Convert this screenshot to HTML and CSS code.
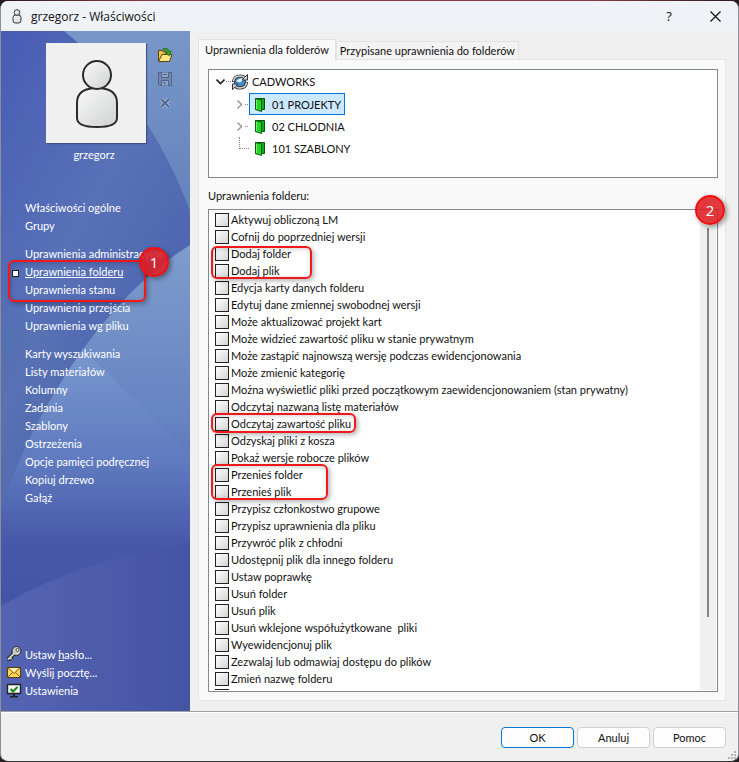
FILE: index.html
```html
<!DOCTYPE html>
<html lang="pl">

<head>
    <meta charset="UTF-8">
    <meta name="viewport" content="width=device-width, initial-scale=1.0">
    <title>grzegorz - Właściwości</title>
    <link rel="stylesheet" href="styles.css">
</head>

<body>
    <svg width="0" height="0" class="defs">
        <defs>
            <linearGradient id="silver" x1="0" y1="0" x2="1" y2="1">
                <stop offset="0" stop-color="#fafafa" />
                <stop offset="1" stop-color="#cfd1d0" />
            </linearGradient>
            <symbol id="folder" viewBox="0 0 12 15">
                <path d="M1.500 1.500h9v11h-9z" fill="#0fae16" stroke="#0a4f10" />
                <path d="M1.500 1.500L7.500 3v11.500L1.500 12.500z" fill="#22d822" stroke="#0b5c12" />
                <path d="M2.500 3v9" stroke="#7af070" />
            </symbol>
        </defs>
    </svg>

    <div class="window">
        <header class="titlebar">
            <svg class="title-icon" viewBox="0 0 10 15" fill="url(#silver)" stroke="#333">
                <rect x="1" y="6" width="8" height="8" rx="2.500" />
                <circle cx="5" cy="3.500" r="2.800" />
            </svg>
            <h1>grzegorz - Właściwości</h1>
            <button type="button" class="title-btn" aria-label="Pomoc">?</button>
            <button type="button" class="title-btn" aria-label="Zamknij">
                <svg width="11" height="11" viewBox="0 0 11 11" stroke="#111" stroke-width="1.200">
                    <path d="M0.500 0.500l10 10M10.500 0.500l-10 10" />
                </svg>
            </button>
        </header>

        <div class="main">
            <aside class="sidebar">
                <svg class="sidebar-bg" viewBox="0 0 189 680" preserveAspectRatio="none">
                    <defs>
                        <linearGradient id="bgBase" x1="0" y1="0" x2="0.600" y2="1">
                            <stop offset="0" stop-color="#485cb2" />
                            <stop offset="0.180" stop-color="#526bb5" />
                            <stop offset="0.420" stop-color="#5872b4" />
                            <stop offset="0.600" stop-color="#5167ae" />
                            <stop offset="1" stop-color="#4050a0" />
                        </linearGradient>
                        <linearGradient id="bgUpper" x1="0" y1="0" x2="1" y2="1">
                            <stop offset="0" stop-color="#485cb4" />
                            <stop offset="0.500" stop-color="#5871b7" />
                            <stop offset="1" stop-color="#4a61ac" />
                        </linearGradient>
                        <linearGradient id="bgTop" x1="0" y1="0" x2="0" y2="1">
                            <stop offset="0" stop-color="#7897c8" />
                            <stop offset="1" stop-color="#6583bc" />
                        </linearGradient>
                        <linearGradient id="bgArc" x1="0" y1="0" x2="0" y2="1">
                            <stop offset="0" stop-color="#7e9ccc" />
                            <stop offset="0.450" stop-color="#6683c2" />
                            <stop offset="0.750" stop-color="#5065b2" />
                            <stop offset="1" stop-color="#4555a5" />
                        </linearGradient>
                        <linearGradient id="bgCone" x1="0" y1="0" x2="0" y2="1">
                            <stop offset="0" stop-color="#7998ce" />
                            <stop offset="0.400" stop-color="#5f7abf" />
                            <stop offset="0.680" stop-color="#4859a9" />
                            <stop offset="1" stop-color="#4252a2" />
                        </linearGradient>
                        <linearGradient id="bgBottom" x1="0" y1="0" x2="1" y2="0">
                            <stop offset="0" stop-color="#5564b2" />
                            <stop offset="1" stop-color="#4454a4" />
                        </linearGradient>
                    </defs>
                    <path d="M0 0H189V680H0z" fill="url(#bgBase)" />
                    <path d="M0 0H189V330H85L0 269z" fill="url(#bgUpper)" />
                    <path d="M63 0Q146 66 189 180V0z" fill="url(#bgTop)" />
                    <path d="M189 214Q132 250 82 318Q28 395 0 477V600H189z" fill="url(#bgArc)" />
                    <path d="M82 318L189 424V600H0V477Q28 395 82 318z" fill="url(#bgCone)" />
                    <path d="M0 575Q75 530 189 512V680H0z" fill="url(#bgBottom)" />
                </svg>

                <div class="profile">
                    <div class="profile-card">
                        <svg class="avatar" viewBox="0 0 100 100">
                            <path d="M31 60Q31 45 51 45T71 60V75Q71 84 51 84T31 75z" fill="url(#silver)" stroke="#2b2b2b" stroke-width="2" />
                            <circle cx="51" cy="32" r="14" fill="url(#silver)" stroke="#2b2b2b" stroke-width="2" />
                        </svg>
                        <span>grzegorz</span>
                    </div>
                    <div class="tools">
                        <button type="button" aria-label="Otwórz">
                            <svg width="16" height="16" viewBox="0 0 16 16">
                                <path d="M1.500 14.500V3.500h4l1 1.500h6v9.500z" fill="#f3c33c" stroke="#5c4310" />
                                <path d="M1.500 14.500L5 7.500h10l-2.500 7z" fill="#ffe680" stroke="#5c4310" />
                                <path d="M6 1.500q5-1 6.500 3l2-.5-2 5-4.500-3 2-.5q-1-2.500-4-3z" fill="#35a024" stroke="#17660f" stroke-width="0.600" />
                            </svg>
                        </button>
                        <button type="button" aria-label="Zapisz" disabled>
                            <svg width="16" height="16" viewBox="0 0 16 16" fill="none" stroke="#4f6488">
                                <path d="M1.500 1.500h13v13h-12l-1-1z" fill="#7088b0" />
                                <path d="M4.500 1.500v5h7v-5M4.500 14.500v-5h7v5" fill="#8ea4c8" />
                                <path d="M6 3.500h4M6 11.500h2v2" />
                            </svg>
                        </button>
                        <button type="button" aria-label="Usuń" disabled>
                            <svg width="16" height="16" viewBox="0 0 16 16" fill="none">
                                <path d="M4 4l8 8M12 4l-8 8" stroke="#9fb4d4" stroke-width="4" />
                                <path d="M4 4l8 8M12 4l-8 8" stroke="#536a8e" stroke-width="2" />
                            </svg>
                        </button>
                    </div>
                </div>

                <nav class="menu">
                    <ul>
                        <li><a href="#">Właściwości ogólne</a></li>
                        <li><a href="#">Grupy</a></li>
                    </ul>
                    <ul class="marked">
                        <li><a href="#">Uprawnienia administracyjne</a></li>
                        <li class="current"><a href="#" aria-current="page">Uprawnienia folderu</a></li>
                        <li><a href="#">Uprawnienia stanu</a></li>
                        <li><a href="#">Uprawnienia przejścia</a></li>
                        <li><a href="#">Uprawnienia wg pliku</a></li>
                        <li class="mark mark-nav" aria-hidden="true"></li>
                        <li class="badge badge-nav">1</li>
                    </ul>
                    <ul>
                        <li><a href="#">Karty wyszukiwania</a></li>
                        <li><a href="#">Listy materiałów</a></li>
                        <li><a href="#">Kolumny</a></li>
                        <li><a href="#">Zadania</a></li>
                        <li><a href="#">Szablony</a></li>
                        <li><a href="#">Ostrzeżenia</a></li>
                        <li><a href="#">Opcje pamięci podręcznej</a></li>
                        <li><a href="#">Kopiuj drzewo</a></li>
                        <li><a href="#">Gałąź</a></li>
                    </ul>
                </nav>

                <ul class="actions">
                    <li>
                        <svg width="16" height="16" viewBox="0 0 16 16">
                            <path d="M9 6.500L2 13.500M4 11.500l2 2M2.500 13l1 1" stroke="#222" stroke-width="4" />
                            <circle cx="10.500" cy="5" r="4.500" fill="#c9cbc8" stroke="#222" />
                            <path d="M9 6.500L2 13.500M4 11.500l1.500 1.500" stroke="#c9cbc8" stroke-width="2" />
                            <circle cx="11.500" cy="4" r="1.500" fill="#fff" stroke="#444" />
                        </svg>
                        <a href="#">Ustaw <u>h</u>asło...</a>
                    </li>
                    <li>
                        <svg width="16" height="16" viewBox="0 0 16 16">
                            <path d="M1.500 3.500h13v10h-13z" fill="#ffd65c" stroke="#5a3c08" />
                            <path d="M2 4l6 5.500L14 4M2 13l4.500-4.500M14 13L9.500 8.500" fill="none" stroke="#8e5f12" />
                            <path d="M3.500 4h9L8 8z" fill="#fff3b8" />
                        </svg>
                        <a href="#">Wyślij pocztę...</a>
                    </li>
                    <li>
                        <svg width="16" height="16" viewBox="0 0 16 16">
                            <path d="M1.500 2.500h13v9h-13z" fill="#f4f6f4" stroke="#222" stroke-width="1.400" />
                            <path d="M7 12h2v2h3v1.500H4V14h3z" fill="#222" />
                            <path d="M4.500 7l2.500 2.500L11.500 5" fill="none" stroke="#178a1b" stroke-width="2" />
                        </svg>
                        <a href="#">Ustawienia</a>
                    </li>
                </ul>
            </aside>

            <section class="content">
                <div class="tabs" role="tablist">
                    <button type="button" class="tab active" role="tab" aria-selected="true">Uprawnienia dla folderów</button>
                    <button type="button" class="tab" role="tab" aria-selected="false">Przypisane uprawnienia do folderów</button>
                </div>

                <div class="panel">
                    <div class="tree" role="tree">
                        <div class="node root" role="treeitem" aria-expanded="true">
                            <svg class="arrow" viewBox="0 0 9 9"><path d="M0.500 2.500l4 4 4-4" fill="none" stroke="#222" stroke-width="1.600" /></svg>
                            <span class="dots"></span>
                            <svg width="16" height="16" viewBox="0 0 16 16">
                                <circle cx="8" cy="8" r="5.500" fill="#3f8fd0" stroke="#234" />
                                <path d="M4 7q4-4 8-2L8 8.500z" fill="#e8f4fb" />
                                <path d="M1.500 8Q2 2 8.500 2 11 2 12.500 3.500M14.500 8Q14 14 7.500 14 5 14 3.500 12.500" fill="none" stroke="#333" stroke-width="3.200" />
                                <path d="M10 6h5.500V0.500zM6 10H0.500v5.500z" fill="#d4d7d8" stroke="#333" />
                                <path d="M1.500 7.500Q2 2 8.500 2 11 2 12.500 3.500M14.500 8.500Q14 14 7.500 14 5 14 3.500 12.500" fill="none" stroke="#d4d7d8" stroke-width="1.500" />
                            </svg>
                            <span class="name">CADWORKS</span>
                        </div>
                        <div class="branch">
                            <div class="node" role="treeitem">
                                <svg class="arrow" viewBox="0 0 9 9"><path d="M2.500 0.500l4 4-4 4" fill="none" stroke="#999" stroke-width="1.500" /></svg>
                                <span class="dots"></span>
                                <span class="pick selected"><svg width="12" height="15"><use href="#folder" /></svg>01 PROJEKTY</span>
                            </div>
                            <div class="node" role="treeitem">
                                <svg class="arrow" viewBox="0 0 9 9"><path d="M2.500 0.500l4 4-4 4" fill="none" stroke="#999" stroke-width="1.500" /></svg>
                                <span class="dots"></span>
                                <span class="pick"><svg width="12" height="15"><use href="#folder" /></svg>02 CHLODNIA</span>
                            </div>
                            <div class="node leaf" role="treeitem">
                                <span class="dots"></span>
                                <span class="pick"><svg width="12" height="15"><use href="#folder" /></svg>101 SZABLONY</span>
                            </div>
                        </div>
                    </div>

                    <h2>Uprawnienia folderu:</h2>

                    <div class="list-wrap">
                        <div class="list">
                            <div class="rows">
                                <label><input type="checkbox"> Aktywuj obliczoną LM</label>
                                <label><input type="checkbox"> Cofnij do poprzedniej wersji</label>
                                <label><input type="checkbox"> Dodaj folder</label>
                                <label><input type="checkbox"> Dodaj plik</label>
                                <label><input type="checkbox"> Edycja karty danych folderu</label>
                                <label><input type="checkbox"> Edytuj dane zmiennej swobodnej wersji</label>
                                <label><input type="checkbox"> Może aktualizować projekt kart</label>
                                <label><input type="checkbox"> Może widzieć zawartość pliku w stanie prywatnym</label>
                                <label><input type="checkbox"> Może zastąpić najnowszą wersję podczas ewidencjonowania</label>
                                <label><input type="checkbox"> Może zmienić kategorię</label>
                                <label><input type="checkbox"> Można wyświetlić pliki przed początkowym zaewidencjonowaniem (stan prywatny)</label>
                                <label><input type="checkbox"> Odczytaj nazwaną listę materiałów</label>
                                <label><input type="checkbox"> Odczytaj zawartość pliku</label>
                                <label><input type="checkbox"> Odzyskaj pliki z kosza</label>
                                <label><input type="checkbox"> Pokaż wersje robocze plików</label>
                                <label><input type="checkbox"> Przenieś folder</label>
                                <label><input type="checkbox"> Przenieś plik</label>
                                <label><input type="checkbox"> Przypisz członkostwo grupowe</label>
                                <label><input type="checkbox"> Przypisz uprawnienia dla pliku</label>
                                <label><input type="checkbox"> Przywróć plik z chłodni</label>
                                <label><input type="checkbox"> Udostępnij plik dla innego folderu</label>
                                <label><input type="checkbox"> Ustaw poprawkę</label>
                                <label><input type="checkbox"> Usuń folder</label>
                                <label><input type="checkbox"> Usuń plik</label>
                                <label><input type="checkbox"> Usuń wklejone współużytkowane&nbsp; pliki</label>
                                <label><input type="checkbox"> Wyewidencjonuj plik</label>
                                <label><input type="checkbox"> Zezwalaj lub odmawiaj dostępu do plików</label>
                                <label><input type="checkbox"> Zmień nazwę folderu</label>
                                <label><input type="checkbox" aria-label="Zmień nazwę pliku"></label>
                            </div>
                            <div class="scrollbar"><div class="thumb"></div></div>
                        </div>
                        <div class="mark mark-add"></div>
                        <div class="mark mark-read"></div>
                        <div class="mark mark-move"></div>
                        <div class="badge badge-list">2</div>
                    </div>
                </div>
            </section>
        </div>

        <footer class="footer">
            <button type="button" class="btn default">OK</button>
            <button type="button" class="btn">Anuluj</button>
            <button type="button" class="btn">Pomoc</button>
            <svg class="grip" width="9" height="9" viewBox="0 0 9 9" fill="#b5b5b5">
                <path d="M7 0h2v2H7zM7 3h2v2H7zM4 3h2v2H4zM7 6h2v2H7zM4 6h2v2H4zM1 6h2v2H1z" />
            </svg>
        </footer>
    </div>
</body>

</html>
```
FILE: styles.css
```css
* {
    box-sizing: border-box;
}

body {
    margin: 0;
    padding-top: 1px;
    background: linear-gradient(to right, #241c20, #8a3b3e 20%, #8a3b3e 80%, #241c20);
    font-family: Lato, Tahoma, sans-serif;
    font-size: 11px;
    color: #111;
}

h1,
h2,
ul {
    margin: 0;
    padding: 0;
    font-weight: normal;
    list-style: none;
}

button {
    padding: 0;
    border: none;
    background: none;
    font: inherit;
    color: inherit;
}

a {
    color: inherit;
    text-decoration: none;
}

svg {
    display: block;
    flex: none;
}

.defs {
    position: absolute;
}

.window {
    display: flex;
    flex-direction: column;
    height: calc(100vh - 1px);
    border: 1px solid #8d8f96;
    border-top: none;
    border-bottom-color: #333;
    border-radius: 8px;
    background: #f0f0f0;
    overflow: hidden;
}

/* title bar */

.titlebar {
    display: flex;
    flex: none;
    align-items: center;
    height: 30px;
    padding-left: 11px;
    background: #eff3f8;
}

.title-icon {
    width: 10px;
    height: 15px;
}

.titlebar h1 {
    flex: 1;
    margin-left: 9px;
    font-family: "Open Sans", "Segoe UI", sans-serif;
    font-size: 12px;
}

.title-btn {
    display: flex;
    align-items: center;
    justify-content: center;
    width: 46px;
    height: 30px;
    font-family: "Open Sans", "Segoe UI", sans-serif;
    font-size: 13px;
}

.main {
    display: flex;
    flex: 1;
    min-height: 0;
}

/* sidebar */

.sidebar {
    position: relative;
    display: flex;
    flex: none;
    flex-direction: column;
    width: 189px;
    color: #fff;
}

.sidebar-bg {
    position: absolute;
    width: 100%;
    height: 100%;
    z-index: -1;
}

.window,
.sidebar {
    isolation: isolate;
}

.profile {
    display: flex;
    gap: 11px;
    padding: 12px 0 0 45px;
}

.profile-card {
    width: 100px;
    text-align: center;
}

.profile-card span {
    display: block;
    margin-top: 3px;
    line-height: 18px;
    padding-right: 4px;
}

.avatar {
    width: 100px;
    height: 100px;
    background: #f0f0f0;
    box-shadow: 1px 1px 1px #3d4f8c;
}

.tools {
    display: flex;
    flex-direction: column;
    gap: 8px;
    padding-top: 4px;
}

.menu {
    display: flex;
    flex: 1;
    flex-direction: column;
    gap: 10px;
    padding-top: 35px;
}

.menu a {
    display: block;
    padding-left: 24px;
    line-height: 18px;
}

.marked,
.current {
    position: relative;
}

.current a {
    text-decoration: underline;
}

.current::before {
    content: "";
    position: absolute;
    top: 7px;
    left: 11px;
    width: 5px;
    height: 5px;
    border: 1px solid #222;
    background: #fff;
}

.actions {
    padding: 0 0 12px 5px;
}

.actions li {
    display: flex;
    align-items: center;
    gap: 3px;
    height: 18px;
}

/* right side */

.content {
    display: flex;
    flex: 1;
    flex-direction: column;
    min-width: 0;
    padding: 8px 12px 10px 8px;
}

.tabs {
    display: flex;
    align-items: flex-end;
}

.tab {
    height: 18px;
    padding: 0 3px;
    border: 1px solid #e2e2e2;
    border-bottom: none;
    background: #f3f3f3;
}

.tab.active {
    z-index: 1;
    height: 21px;
    margin-bottom: -1px;
    padding: 0 6px 2px;
    background: #f9f9f9;
}

.panel {
    display: flex;
    flex: 1;
    flex-direction: column;
    min-height: 0;
    padding: 9px 7px 8px 9px;
    border: 1px solid #e5e5e5;
    background: #f9f9f9;
}

.tree {
    height: 109px;
    flex: none;
    padding: 0 7px;
    border: 1px solid #828790;
    background: #fff;
}

.node {
    display: flex;
    align-items: center;
    height: 22px;
}

.root {
    height: 23px;
}

.arrow {
    width: 9px;
    height: 9px;
}

.dots {
    width: 4px;
    margin: 0 1px;
    border-top: 1px dotted #888;
}

.root .dots {
    width: 5px;
}

.root .name {
    margin-left: 4px;
}

.branch {
    padding-left: 19px;
}

.branch .dots {
    width: 3px;
}

.pick {
    display: flex;
    align-items: center;
    gap: 6px;
    height: 22px;
    padding: 0 3px 0 4px;
    border: 1px solid transparent;
}

.pick.selected {
    border-color: #0078d7;
    background: #cce8ff;
}

.leaf {
    padding-left: 4px;
}

.branch .leaf .dots {
    width: 10px;
    height: 12px;
    margin: 0;
    border-top: none;
    border-left: 1px dotted #888;
    border-bottom: 1px dotted #888;
    align-self: flex-start;
}

h2 {
    margin: 9px 0 4px;
    font-size: 11px;
    line-height: 18px;
}

.list-wrap {
    position: relative;
    flex: 1;
    min-height: 0;
}

.list {
    display: flex;
    height: 100%;
    padding: 1px;
    border: 1px solid #828790;
    background: #fff;
    overflow: hidden;
}

.rows {
    flex: 1;
    padding-left: 5px;
    overflow: hidden;
}

.rows label {
    display: flex;
    align-items: center;
    gap: 2px;
    height: 17px;
    white-space: nowrap;
}

.rows input {
    appearance: none;
    width: 14px;
    height: 14px;
    margin: 0;
    border: 1px solid #222;
    background: linear-gradient(135deg, #fff, #d4d4d4);
}

.scrollbar {
    width: 16px;
    padding: 17px 7px 73px;
    background: #f0f0f0;
}

.thumb {
    height: 100%;
    background: #858585;
}

/* numbered callouts */

.mark {
    position: absolute;
    border: 2px solid #f01818;
    border-radius: 6px;
    box-shadow: 2px 2px 5px rgba(0, 0, 0, 0.3), inset 1px 1px 5px rgba(0, 0, 0, 0.2);
    pointer-events: none;
}

.mark-nav {
    top: 15px;
    left: 7px;
    width: 138px;
    height: 42px;
}

.mark-add {
    top: 37px;
    left: 3px;
    width: 101px;
    height: 33px;
}

.mark-read {
    top: 204px;
    left: 3px;
    width: 145px;
    height: 20px;
}

.mark-move {
    top: 255px;
    left: 3px;
    width: 117px;
    height: 36px;
}

.badge {
    position: absolute;
    width: 30px;
    height: 30px;
    border: 2px solid #f01010;
    border-radius: 50%;
    background: rgba(222, 30, 35, 0.88);
    box-shadow: 2px 2px 5px rgba(0, 0, 0, 0.4);
    color: #fff;
    font-family: "Open Sans", "Segoe UI", sans-serif;
    font-size: 15px;
    line-height: 26px;
    text-align: center;
}

.badge-nav {
    top: 2px;
    left: 138px;
}

.badge-list {
    top: -14px;
    right: -7px;
}

/* bottom buttons */

.footer {
    position: relative;
    display: flex;
    flex: none;
    justify-content: flex-end;
    gap: 3px;
    padding: 15px 12px 13px;
    border-top: 1px solid #a0a0a0;
    box-shadow: inset 0 1px #fff;
}

.btn {
    width: 73px;
    height: 21px;
    border: 1px solid #d0d0d0;
    border-radius: 4px;
    background: #fdfdfd;
}

.btn.default {
    border-color: #0078d7;
}

.grip {
    position: absolute;
    right: 2px;
    bottom: 1px;
}
```
